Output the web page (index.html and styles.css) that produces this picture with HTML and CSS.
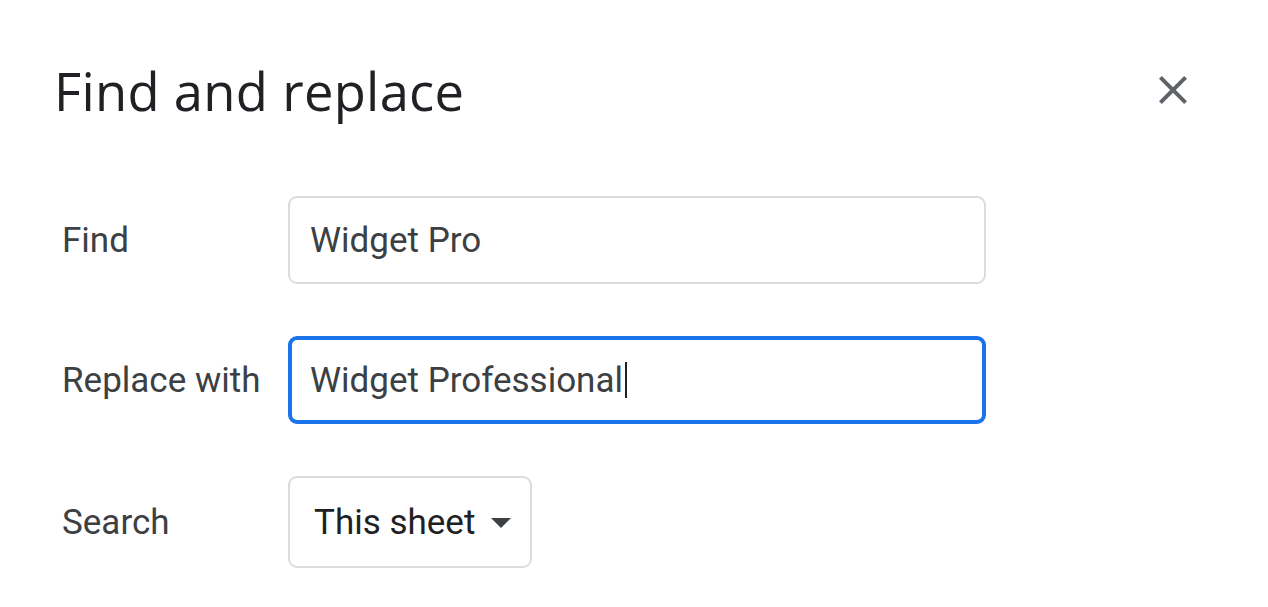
FILE: index.html
```html
<!DOCTYPE html>
<html>
<head>
<meta charset="utf-8">
<link rel="stylesheet" href="styles.css">
</head>
<body>
<div class="dialog">
  <div class="header">
    <h1 class="title">Find and replace</h1>
    <button class="close" aria-label="Close">
      <svg width="48" height="48" viewBox="0 0 24 24"><path fill="#5f6368" d="M19 6.41L17.59 5 12 10.59 6.41 5 5 6.41 10.59 12 5 17.59 6.41 19 12 13.41 17.59 19 19 17.59 13.41 12z"/></svg>
    </button>
  </div>
  <div class="form">
    <label class="label">Find</label>
    <div class="field"><span class="value">Widget Pro</span></div>
    <label class="label">Replace with</label>
    <div class="field focused"><span class="value">Widget Professional</span><span class="caret"></span></div>
    <label class="label">Search</label>
    <div class="select"><span class="select-text">This sheet</span><span class="arrow"></span></div>
  </div>
</div>
</body>
</html>
```
FILE: styles.css
```css
html, body {
  margin: 0;
  padding: 0;
  background: #ffffff;
}
body {
  font-family: Roboto, "Liberation Sans", Arial, sans-serif;
  width: 1268px;
  height: 607px;
  overflow: hidden;
}
.dialog {
  padding: 0 0 0 56px;
}
.header {
  display: flex;
  align-items: center;
  justify-content: space-between;
  height: 142px;
  padding-top: 38px;
  box-sizing: border-box;
  padding-right: 71px;
}
.title {
  margin: 0 0 0 -2px;
  font-family: "Open Sans", Roboto, sans-serif;
  font-weight: 400;
  font-size: 52.5px;
  color: #202124;
  letter-spacing: 0.3px;
}
.close {
  border: 0;
  background: none;
  padding: 0;
  width: 48px;
  height: 48px;
  display: flex;
}
.form {
  display: grid;
  grid-template-columns: 226px 698px;
  grid-auto-rows: auto;
  row-gap: 52px;
  padding-left: 6px;
  margin-top: 54px;
  align-items: center;
}
.label {
  font-size: 35px;
  color: #3c4043;
}
.field {
  box-sizing: border-box;
  height: 88px;
  border: 2px solid #dadce0;
  border-radius: 9px;
  padding-left: 20px;
  display: flex;
  align-items: center;
  font-size: 35px;
  color: #3c4043;
}
.field.focused {
  border: 4px solid #1a73e8;
  padding-left: 18px;
}
.caret {
  width: 2px;
  height: 36px;
  background: #202124;
  margin-left: 2px;
}
.select {
  box-sizing: border-box;
  width: 244px;
  height: 92px;
  border: 2px solid #dadce0;
  border-radius: 9px;
  padding-left: 24px;
  display: flex;
  align-items: center;
  font-size: 35px;
  color: #202124;
}
.arrow {
  width: 0;
  height: 0;
  border-left: 10px solid transparent;
  border-right: 10px solid transparent;
  border-top: 10px solid #3c4043;
  margin-left: 16px;
  margin-top: 2px;
}
```
